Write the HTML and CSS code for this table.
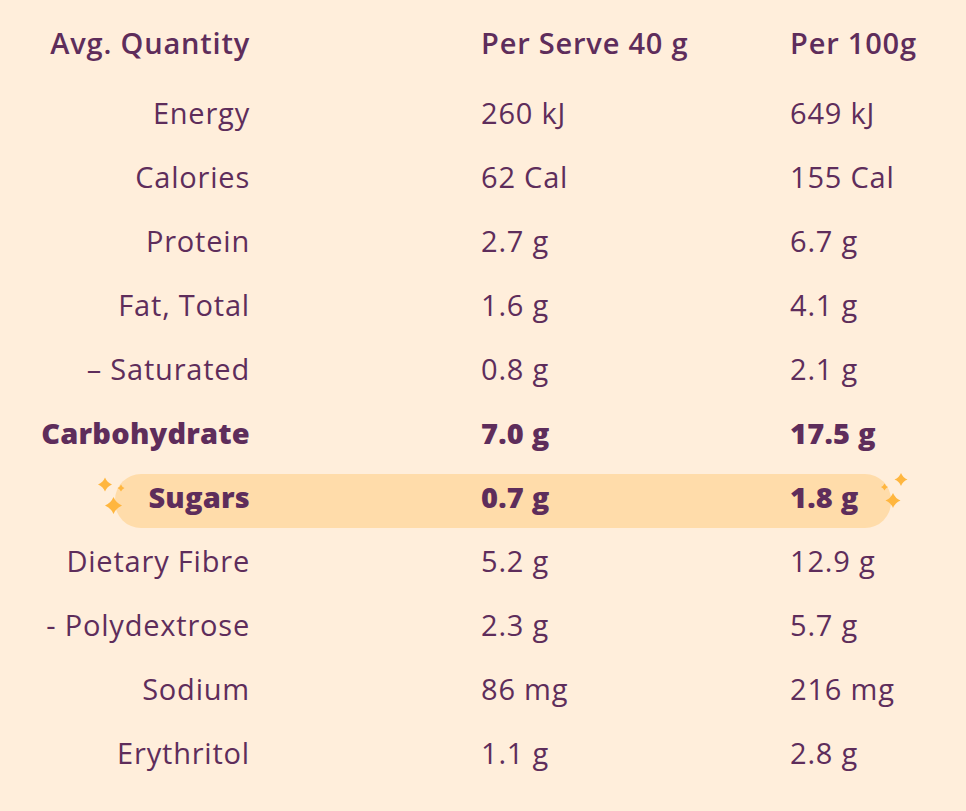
FILE: index.html
```html
<!DOCTYPE html>
<html>
<head>
<meta charset="utf-8">
<link rel="stylesheet" href="styles.css">
</head>
<body>
<div class="table">
  <div class="row head"><div class="name">Avg. Quantity</div><div class="v1">Per Serve 40 g</div><div class="v2">Per 100g</div></div>
  <div class="row"><div class="name">Energy</div><div class="v1">260 kJ</div><div class="v2">649 kJ</div></div>
  <div class="row"><div class="name">Calories</div><div class="v1">62 Cal</div><div class="v2">155 Cal</div></div>
  <div class="row"><div class="name">Protein</div><div class="v1">2.7 g</div><div class="v2">6.7 g</div></div>
  <div class="row"><div class="name">Fat, Total</div><div class="v1">1.6 g</div><div class="v2">4.1 g</div></div>
  <div class="row"><div class="name">– Saturated</div><div class="v1">0.8 g</div><div class="v2">2.1 g</div></div>
  <div class="row bold"><div class="name">Carbohydrate</div><div class="v1">7.0 g</div><div class="v2">17.5 g</div></div>
  <div class="row bold hl">
    <svg class="spark sl" width="40" height="44" viewBox="0 0 40 44">
      <path d="M15 3.5 Q17 8.5 22 10.5 Q17 12.5 15 17.5 Q13 12.5 8 10.5 Q13 8.5 15 3.5Z" fill="#ffb63f"/>
      <path d="M31 10.5 Q32 13 34.5 14 Q32 15 31 17.5 Q30 15 27.5 14 Q30 13 31 10.5Z" fill="#ffb63f"/>
      <path d="M23.5 23 Q26 29 32 31.5 Q26 34 23.5 40 Q21 34 15 31.5 Q21 29 23.5 23Z" fill="#ffb63f"/>
    </svg>
    <div class="name">Sugars</div><div class="v1">0.7 g</div><div class="v2">1.8 g</div>
    <svg class="spark sr" width="40" height="44" viewBox="0 0 40 44">
      <path d="M25 1 Q26.9 5.6 31.5 7.5 Q26.9 9.4 25 14 Q23.1 9.4 18.5 7.5 Q23.1 5.6 25 1Z" fill="#ffb63f"/>
      <path d="M8.5 11.5 Q9.5 14 12 15 Q9.5 16 8.5 18.5 Q7.5 16 5 15 Q7.5 14 8.5 11.5Z" fill="#ffb63f"/>
      <path d="M17 21 Q19.2 26.3 24.5 28.5 Q19.2 30.7 17 36 Q14.8 30.7 9.5 28.5 Q14.8 26.3 17 21Z" fill="#ffb63f"/>
    </svg>
  </div>
  <div class="row"><div class="name">Dietary Fibre</div><div class="v1">5.2 g</div><div class="v2">12.9 g</div></div>
  <div class="row"><div class="name">- Polydextrose</div><div class="v1">2.3 g</div><div class="v2">5.7 g</div></div>
  <div class="row"><div class="name">Sodium</div><div class="v1">86 mg</div><div class="v2">216 mg</div></div>
  <div class="row"><div class="name">Erythritol</div><div class="v1">1.1 g</div><div class="v2">2.8 g</div></div>
</div>
</body>
</html>
```
FILE: styles.css
```css
html, body {
  margin: 0;
  background: #ffeedb;
}
body {
  font-family: "Open Sans", "Noto Sans", sans-serif;
  color: #5e2d5b;
  font-size: 29px;
  letter-spacing: 0.8px;
  width: 966px;
  height: 811px;
  overflow: hidden;
}
.table {
  padding-top: 10px;
}
.row {
  position: relative;
  display: grid;
  grid-template-columns: 250px 540px 1fr;
  height: 64px;
  align-items: center;
  font-weight: 500;
}
.name {
  text-align: right;
  white-space: nowrap;
}
.v1 {
  padding-left: 231px;
  white-space: nowrap;
}
.v2 {
  white-space: nowrap;
}
.head {
  font-weight: 600;
  margin-bottom: 6px;
}
.bold {
  font-weight: 800;
  letter-spacing: 0.2px;
}
.hl::before {
  content: "";
  position: absolute;
  left: 115px;
  right: 75px;
  top: 10px;
  bottom: 0;
  background: #ffdcaa;
  border-radius: 26px;
  z-index: 0;
}
.hl > div {
  position: relative;
  z-index: 1;
}
.spark {
  position: absolute;
  z-index: 1;
}
.sl {
  left: 90px;
  top: 10px;
}
.sr {
  left: 876px;
  top: 8px;
}
```
